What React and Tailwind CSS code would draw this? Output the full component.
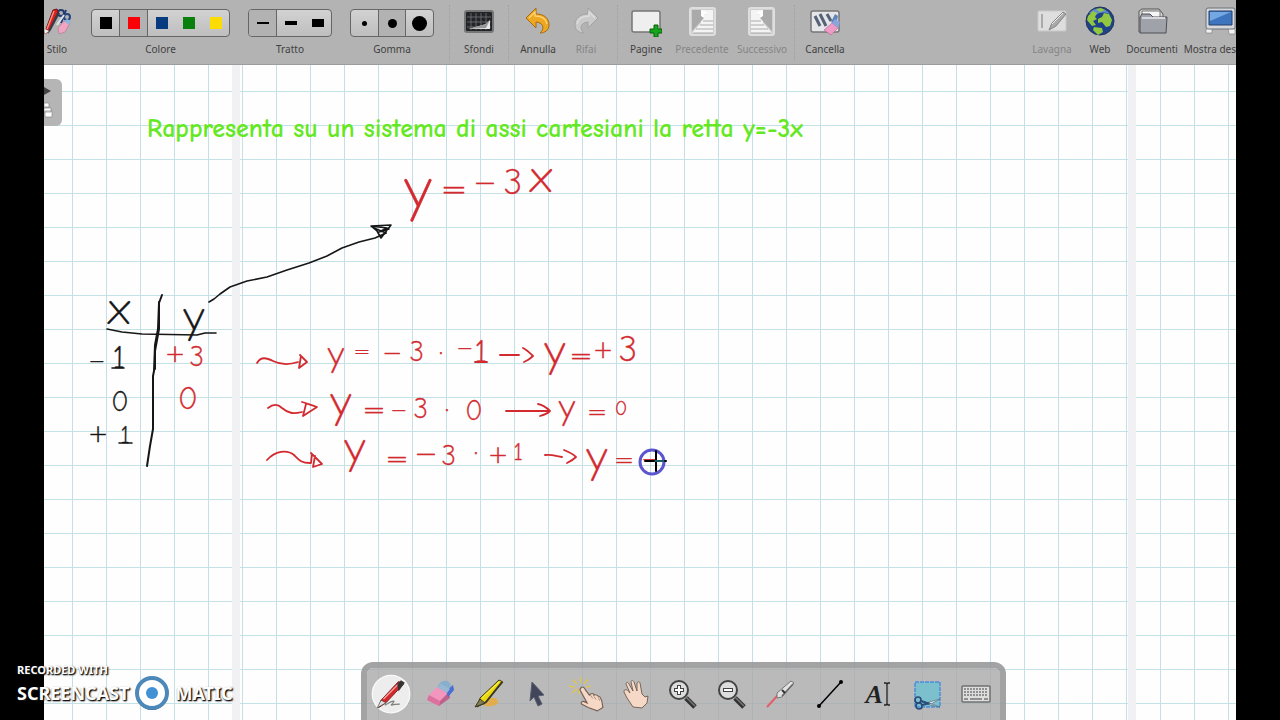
import clsx from 'clsx';

const COLORS = [
  { name: 'Nero', className: 'bg-black' },
  { name: 'Rosso', className: 'bg-[#fb0007]' },
  { name: 'Blu', className: 'bg-[#073b80]' },
  { name: 'Verde', className: 'bg-[#0a800c]' },
  { name: 'Giallo', className: 'bg-[#fbdc04]' },
];

const LINES = [
  { name: 'Sottile', className: 'h-0.5 w-3' },
  { name: 'Medio', className: 'h-1 w-3' },
  { name: 'Spesso', className: 'h-2 w-3' },
];

const ERASERS = [
  { name: 'Piccola', className: 'size-[5px] rounded-full' },
  { name: 'Media', className: 'size-[9px] rounded-full' },
  { name: 'Grande', className: 'size-[15px] rounded-full' },
];

// Handwritten symbols: [text, centre x, baseline, size]
const BLACK_INK = [
  ['x', 119, 324, 46], ['y', 194, 332, 46],
  ['−', 97, 368, 20], ['1', 119, 368, 32],
  ['0', 120, 411, 28],
  ['+', 98, 442, 24], ['1', 125, 443, 24],
];

const RED_INK = [
  ['y', 418, 209, 60], ['=', 454, 200, 32], ['−', 485, 192, 28], ['3', 513, 194, 36], ['x', 541, 192, 46],
  ['+', 175, 362, 24], ['3', 197, 366, 28],
  ['0', 188, 409, 32],
  ['y', 336, 366, 36], ['=', 362, 358, 20], ['−', 392, 361, 24], ['3', 417, 361, 28], ['·', 441, 363, 28],
  ['−', 465, 355, 20], ['1', 481, 362, 32],
  ['y', 555, 366, 46], ['=', 581, 365, 28], ['+', 603, 358, 24], ['3', 628, 361, 36],
  ['y', 341, 417, 46], ['=', 374, 419, 28], ['−', 399, 417, 20], ['3', 421, 418, 28], ['·', 447, 420, 28], ['0', 474, 420, 28],
  ['y', 567, 419, 36], ['=', 597, 420, 24], ['0', 621, 415, 20],
  ['y', 355, 463, 46], ['=', 397, 468, 28], ['−', 426, 463, 28], ['3', 449, 465, 28], ['·', 476, 463, 28], ['+', 498, 463, 24], ['1', 518, 460, 24],
  ['y', 597, 472, 46], ['=', 624, 468, 24], ['−', 650, 466, 20],
];

function Icon({ children, className = 'size-8' }) {
  return (
    <svg viewBox="0 0 32 32" className={clsx('shrink-0', className)} fill="none" aria-hidden="true">
      {children}
    </svg>
  );
}

const StyleIcon = () => (
  <Icon>
    <path d="M20 18l5-13" stroke="#223c73" strokeWidth="2" />
    <circle cx="20" cy="8" r="3" stroke="#223c73" strokeWidth="2" />
    <circle cx="26" cy="12" r="3" stroke="#28457f" strokeWidth="2" />
    <path d="M23 10l-7 10" stroke="#dde3ec" strokeWidth="2" />
    <path d="M17 23l6-7 6 2-5 9-6 2z" fill="#f2a5c2" stroke="#b47b95" strokeWidth=".7" />
    <path d="M23 16l3-2 4 2-2 4z" fill="#8fb5dc" />
    <path d="M12 5l4-1 1 3-9 19-4 3 1-5z" fill="#dc1f1d" stroke="#6e1515" />
    <path d="M13 6L6 24" stroke="#ff9186" strokeWidth="1.4" />
    <path d="M19 8L10 25l-3 4 1-5 8-16z" fill="#393d48" />
    <path d="M4 24l4 2-4 3z" fill="#eee" />
  </Icon>
);

const BoardIcon = () => (
  <Icon>
    <rect x="2" y="6" width="28" height="21" rx="2" fill="#222427" stroke="#777" strokeWidth="2" />
    <path d="M4 12h24M4 17h24M4 22h24M8 8v17M13 8v17M18 8v17M23 8v17" stroke="#73767b" strokeWidth=".8" />
    <path d="M6 24l17-5 4-4v9z" fill="#e8e8e8" />
    <path d="M5 24l18-5 4-4-4 8z" fill="#999" />
  </Icon>
);

const ArrowIcon = ({ redo }) => (
  <Icon className={redo ? 'size-8 -scale-x-100' : 'size-8'}>
    <path
      d="M4 13L14 3v6c8 0 13 4 13 11 0 5-4 8-9 8 4-3 5-10-4-11v6z"
      fill={redo ? '#cacaca' : '#eda720'}
      stroke={redo ? '#a2a2a2' : '#a76c13'}
      strokeLinejoin="round"
    />
    <path d="M7 13l6-6v4c7 0 11 3 12 8" stroke={redo ? '#dedede' : '#ffd475'} strokeWidth="1.3" />
  </Icon>
);

const PageIcon = () => (
  <Icon>
    <rect x="2" y="6" width="28" height="21" rx="2" fill="#efefef" stroke="#777" strokeWidth="1.5" />
    <path d="M24 20h4v4h4v4h-4v4h-4v-4h-4v-4h4z" fill="#16a51b" stroke="#08600b" />
  </Icon>
);

const TurnIcon = ({ next }) => (
  <Icon className={next ? 'size-8 -scale-x-100' : 'size-8'}>
    <rect x="4" y="3" width="25" height="27" rx="2" fill="#cecece" stroke="#dedede" strokeWidth="2" />
    <path d="M15 5h12v23H6l9-10z" fill="#f4f4f4" />
    <path d="M6 5h9l6 4-3 1v3L6 26z" fill="#aaa" />
    <path d="M15 5c3 1 6 1 6 4l-3 1v3l-3-2z" fill="#fff" />
    <path d="M17 16h10M14 20h13M10 24h17M7 28h20" stroke="#aaa" strokeWidth="1" />
  </Icon>
);

const ClearIcon = () => (
  <Icon>
    <rect x="2" y="6" width="28" height="21" rx="2" fill="#e5e6e9" stroke="#777" strokeWidth="1.5" />
    <path d="M6 11l5 10M11 9l6 12M18 9l4 7" stroke="#566275" strokeWidth="3" />
    <path d="M22 17l4-8 3 2-2 9z" fill="#6185bb" />
    <path d="M15 25l8-7 6 5-7 7z" fill="#ee9bc6" stroke="#ad6692" strokeWidth=".6" />
    <path d="M23 18l3-4 5 3-2 6z" fill="#8aa4de" />
  </Icon>
);

const WhiteboardIcon = () => (
  <Icon>
    <rect x="2" y="6" width="28" height="20" rx="1" fill="#dedede" stroke="#c9c9c9" />
    <path d="M6 9v14" stroke="#aaa" strokeWidth="2" />
    <path d="M13 25l3-7L27 7l3 2-10 12z" fill="#aaa" stroke="#858585" />
    <path d="M16 19L27 8" stroke="#eee" />
  </Icon>
);

const GlobeIcon = () => (
  <Icon>
    <circle cx="16" cy="16" r="14" fill="#1e438a" stroke="#253455" />
    <path d="M5 8c6-6 15-6 21 1-5-2-10-2-14 1z" fill="#638dcc" />
    <path d="M4 11l5-5 4 2-2 4 2 2-4 2 3 4-4 1-5-6zM14 14l4-2 2-4 5 1 3 6-2 6-4 1-4-5-4 1zM10 22l8 1 1 4-5 3-5-5zM12 4l5-1 4 2-5 2z" fill="#92c742" />
  </Icon>
);

const FolderIcon = () => (
  <Icon>
    <path d="M3 27V6l3-2h17l4 5v16z" fill="#d4d4d4" stroke="#555" />
    <path d="M6 6h18v18H6z" fill="#f5f5f5" stroke="#777" />
    <path d="M4 28V12l2-3h8l3 3h14l-1 16z" fill="#9fa2a9" stroke="#4d4f55" />
    <path d="M6 13h23" stroke="#d5d7dc" strokeWidth="2" />
  </Icon>
);

const DesktopIcon = () => (
  <Icon>
    <path d="M2 25l2-3h4v6H2zM24 22h5l2 3v4h-6z" fill="#f2f2f2" stroke="#777" strokeWidth=".6" />
    <rect x="2" y="3" width="29" height="21" rx="2" fill="#d5d8dd" stroke="#6d7077" />
    <path d="M5 6h23v14H5z" fill="#3c75bd" stroke="#263e68" />
    <path d="M6 7h21L6 16z" fill="#75a8e2" />
  </Icon>
);

const PenTool = () => (
  <Icon className="size-10">
    <circle cx="16" cy="16" r="15" fill="#ededed" stroke="#fafafa" />
    <path d="M11 25c8-5 9-4 5 0 3-1 5-1 7-1" stroke="#7c8179" />
    <path d="M8 21L22 6l4 2-14 15-6 4z" fill="#d5272a" stroke="#6f1e22" strokeWidth=".7" />
    <path d="M10 20L23 7" stroke="#f7a3a0" />
    <path d="M21 8l3-3 3 2-5 7z" fill="#363333" />
    <path d="M5 27l3-6 4 2z" fill="#e0e0e0" stroke="#444" strokeWidth=".5" />
  </Icon>
);

const EraserTool = () => (
  <Icon>
    <path d="M15 6c4-5 11-4 12 2l-6 6-8-5z" fill="#87aecc" />
    <path d="M5 17l8-8 12 7-10 12L3 22z" fill="#f396bd" />
    <path d="M3 22l12 6 1-5L5 17z" fill="#db719e" />
    <path d="M15 28l1-5 9-9 1 6z" fill="#be628b" />
    <path d="M22 13l7-6 1 5-6 7z" fill="#4a6ed1" />
    <path d="M13 9l4-3 9 5-3 4z" fill="#9ab7d2" />
  </Icon>
);

const MarkerTool = () => (
  <Icon>
    <path d="M14 20h10v3h2c-2 5-9 6-15 5z" fill="#e9ac3a" opacity=".85" />
    <path d="M7 20L26 2l4 2-18 21-8 4z" fill="#ead910" stroke="#3d3910" />
    <path d="M29 4L13 24l-3 2" stroke="#3a3829" strokeWidth="2" />
    <path d="M9 20L26 4" stroke="#fff35b" />
    <path d="M2 29l5-8 5 4z" fill="#81804e" stroke="#38382b" />
  </Icon>
);

const PointerTool = () => (
  <Icon>
    <path d="M11 4l12 13-6 1 4 8-4 2-4-9-4 4z" fill="#41465a" stroke="#595e70" strokeLinejoin="round" />
  </Icon>
);

const FingerTool = () => (
  <Icon className="size-9">
    <path d="M1 9l5 1M4 3l4 4M11 1v5M18 3l-4 4M20 9l-4 1M4 15l4-4M10 12v4" stroke="#e9c832" strokeWidth="1" />
    <path
      d="M12 10c2-1 3 1 4 3l3 4 1-1c2-1 3 0 3 1 2-1 3 0 4 1 2 0 2 2 3 4l1 6-5 3-8-3-6-3c-1-2 1-3 3-2l2 1-6-11c-1-1 0-2 1-3z"
      fill="#f6d8c7"
      stroke="#766056"
    />
    <path d="M20 17l2 3M23 18l2 3M27 19l1 3" stroke="#9c7d6e" strokeWidth=".7" />
  </Icon>
);

const HandTool = () => (
  <Icon>
    <path
      d="M6 12c2-1 3 1 5 3L7 6c0-2 2-2 3 0l4 7-2-9c0-2 2-2 3 0l3 9V5c1-2 3-1 3 0l2 11 3 3 3-1-1 7-5 5-9-1-6-9-3-6c0-1 0-2 1-2z"
      fill="#f6d8c7"
      stroke="#77655a"
    />
  </Icon>
);

const ZoomTool = ({ plus }) => (
  <Icon>
    <path d="M19 20l9 9" stroke="#333" strokeWidth="5" />
    <path d="M19 19l9 9" stroke="#777" strokeWidth="1.5" />
    <circle cx="12" cy="12" r="9" fill="#ddd" stroke="#444" strokeWidth="2" />
    <path d="M7 12h10" stroke="#444" strokeWidth="4" />
    {plus && <path d="M12 7v10" stroke="#444" strokeWidth="4" />}
    <path d="M8 12h8" stroke="#fff" strokeWidth="2" />
    {plus && <path d="M12 8v8" stroke="#fff" strokeWidth="2" />}
  </Icon>
);

const LaserTool = () => (
  <Icon>
    <path d="M2 29l11-12" stroke="#e25f68" strokeWidth="2" />
    <path d="M12 15L26 3l3 2-12 14-5 1z" fill="#e2e2e2" stroke="#777" />
    <path d="M28 6L17 18" stroke="#666" strokeWidth="1.5" />
    <path d="M17 12l3 3" stroke="#333" strokeWidth="2" />
  </Icon>
);

const LineTool = () => (
  <Icon>
    <path d="M5 28L27 4" stroke="#000" strokeWidth="1.5" />
    <circle cx="5" cy="28" r="2" fill="#000" />
    <circle cx="27" cy="4" r="2" fill="#000" />
  </Icon>
);

const TextTool = () => (
  <span className="flex items-center font-['Liberation_Serif',serif] text-[26px] text-[#222]">
    <span className="font-bold italic">A</span>
    <svg viewBox="0 0 8 24" className="h-6 w-2" fill="none" aria-hidden="true">
      <path d="M1 1h2l1 1 1-1h2M4 2v20M1 23h2l1-1 1 1h2" stroke="#222" strokeWidth="1.3" />
    </svg>
  </span>
);

const CaptureTool = () => (
  <Icon>
    <rect x="4" y="4" width="25" height="25" fill="#7cc0cd" stroke="#2774e6" strokeDasharray="4 1" />
    <circle cx="7" cy="22" r="3" stroke="#294b78" strokeWidth="1.7" />
    <circle cx="8" cy="28" r="3" stroke="#294b78" strokeWidth="1.7" />
    <path d="M10 23l9 3M11 27l8-2" stroke="#294b78" strokeWidth="2" />
    <path d="M18 24l11-3-9 5zM18 25l11 4-10-2z" fill="#dee6ea" stroke="#587381" strokeWidth=".7" />
  </Icon>
);

const KeyboardTool = () => (
  <Icon>
    <rect x="2" y="8" width="28" height="16" rx="1" fill="#ddd" stroke="#707070" strokeWidth="1.5" />
    <path d="M4 11h24M4 14h24M4 17h24" stroke="#777" strokeWidth="1.5" strokeDasharray="2 1" />
    <path d="M4 21h4M10 21h12M24 21h4" stroke="#777" strokeWidth="1.5" />
  </Icon>
);

const TOOLS = [
  { name: 'Penna', icon: <PenTool /> },
  { name: 'Cancellino', icon: <EraserTool /> },
  { name: 'Evidenziatore', icon: <MarkerTool /> },
  { name: 'Selezione', icon: <PointerTool /> },
  { name: 'Interagisci', icon: <FingerTool /> },
  { name: 'Scorri', icon: <HandTool /> },
  { name: 'Ingrandisci', icon: <ZoomTool plus /> },
  { name: 'Riduci', icon: <ZoomTool /> },
  { name: 'Laser', icon: <LaserTool /> },
  { name: 'Linea', icon: <LineTool /> },
  { name: 'Testo', icon: <TextTool /> },
  { name: 'Cattura', icon: <CaptureTool /> },
  { name: 'Tastiera', icon: <KeyboardTool /> },
];

function ToolButton({ label, icon, disabled, className }) {
  return (
    <button
      type="button"
      disabled={disabled}
      className={clsx('flex h-14 shrink-0 flex-col items-center whitespace-nowrap', disabled ? 'text-[#858585]' : 'text-[#414141]', className)}
    >
      {icon}
      <span className="mt-1 leading-4">{label}</span>
    </button>
  );
}

function Choice({ label, options, active, divided, swatch, className }) {
  return (
    <div role="group" aria-label={label} className={clsx('flex shrink-0 flex-col items-center pt-1', className)}>
      <div className="flex h-7 w-full overflow-hidden rounded border border-[#666] bg-linear-to-b from-[#d2d2d2] to-[#bebebe]">
        {options.map((option, index) => (
          <button
            key={option.name}
            type="button"
            aria-label={option.name}
            aria-pressed={index === active}
            className={clsx('flex flex-1 items-center justify-center', index === active && 'bg-[#b2b2b2]', divided.includes(index) && 'border-r border-[#666]')}
          >
            <span className={clsx(option.className, swatch ? 'size-3' : 'bg-black')} />
          </button>
        ))}
      </div>
      <span className="mt-1 leading-4 text-[#414141]">{label}</span>
    </div>
  );
}

const Separator = () => <span className="h-14 w-0 shrink-0 border-l border-dotted border-[#a0a0a0]" />;

function Toolbar() {
  return (
    <header className="flex h-[65px] shrink-0 overflow-hidden border-b border-[#9c9c9c] bg-[#b3b3b3] pt-[5px] font-['Noto_Sans',sans-serif] text-[10px]">
      <ToolButton label="Stilo" icon={<StyleIcon />} className="w-[26px]" />
      <div className="ml-[21px] mr-[15px] flex shrink-0 gap-[18px]">
        <Choice label="Colore" options={COLORS} active={1} divided={[0, 1]} swatch className="w-[139px]" />
        <Choice label="Tratto" options={LINES} active={0} divided={[0]} className="w-[84px]" />
        <Choice label="Gomma" options={ERASERS} active={1} divided={[0, 1]} className="w-[84px]" />
      </div>
      <Separator />
      <ToolButton label="Sfondi" icon={<BoardIcon />} className="w-[58px]" />
      <Separator />
      <ToolButton label="Annulla" icon={<ArrowIcon />} className="w-[58px]" />
      <ToolButton label="Rifai" icon={<ArrowIcon redo />} disabled className="mr-3 w-[38px]" />
      <Separator />
      <ToolButton label="Pagine" icon={<PageIcon />} className="w-[56px]" />
      <ToolButton label="Precedente" icon={<TurnIcon />} disabled className="w-[56px]" />
      <ToolButton label="Successivo" icon={<TurnIcon next />} disabled className="w-[64px]" />
      <Separator />
      <ToolButton label="Cancella" icon={<ClearIcon />} className="w-[60px]" />
      <div className="ml-auto flex shrink-0">
        <ToolButton label="Lavagna" icon={<WhiteboardIcon />} disabled className="w-[48px]" />
        <ToolButton label="Web" icon={<GlobeIcon />} className="w-[48px]" />
        <ToolButton label="Documenti" icon={<FolderIcon />} className="w-[56px]" />
        <button type="button" className="flex h-14 w-[56px] shrink-0 flex-col items-end whitespace-nowrap text-[#414141]">
          <DesktopIcon />
          <span className="mt-1 leading-4">Mostra des</span>
        </button>
      </div>
    </header>
  );
}

function InkText({ items }) {
  return items.map(([text, x, y, size]) => (
    <text
      key={`${x}-${y}`}
      x={x}
      y={y}
      fontSize={size}
      textAnchor="middle"
      className={
        '=−+·'.includes(text)
          ? "font-['DejaVu_Sans',sans-serif] font-extralight"
          : "font-['Comic_Sans_MS','Comic_Neue','DejaVu_Sans',sans-serif] font-light"
      }
    >
      {text}
    </text>
  ));
}

function Ink() {
  return (
    <svg
      viewBox="44 65 1192 655"
      className="absolute left-0 top-0 h-[655px] w-[1192px]"
      fill="none"
      strokeLinecap="round"
      strokeLinejoin="round"
    >
      {/* table rules and the arrow to the equation */}
      <g stroke="#161616" strokeWidth="2">
        <path d="M162 295l-3 8-1 26-3 16-1 26-1 5v53l-3 17-3 20" />
        <path d="M159 302v27l-4 22v18" />
        <path d="M107 329l15 3 20 2 55 1 8-2h11" strokeWidth="1.6" />
        <path d="M112 368h12M119 443h13" strokeWidth="1.6" />
        <path d="M209 302l5-3 6-5 10-7 17-6 20-4 20-7 22-7 18-7 15-8 17-6 16-4 11-5" strokeWidth="1.6" />
        <path d="M371 226l20-1-10 13-4-7zM371 226l16 2-8 4 10-3M374 228l12 5" strokeWidth="1.6" />
      </g>
      <g fill="#161616" stroke="#161616" strokeWidth=".4">
        <InkText items={BLACK_INK} />
      </g>

      {/* arrows between the steps */}
      <g stroke="#d32a30" strokeWidth="1.8">
        <path d="M257 363c4-7 10-5 16-2 8 4 16 4 25 1M300 355l7 7-8 6 2-12" />
        <path d="M268 408c5-4 10-4 14 0 7 6 12 6 20 4M302 402c6 2 10 3 15 5l-14 9 3-12" />
        <path d="M267 460c8-9 20-11 27-5 5 5 7 8 16 8M311 453l11 11-9 3 2-11M312 454l-1 9" />
        <path d="M500 355h19M523 348c4 2 7 5 10 8-2 2-4 4-9 6" />
        <path d="M506 411h42M538 404c5 1 8 3 12 7-3 3-6 4-10 5" />
        <path d="M545 455c6-1 11 1 17 2M564 450c5 2 9 4 12 7-3 3-5 4-9 6" />
        <path d="M475 362h12" />
      </g>
      <g fill="#d32a30" stroke="#d32a30" strokeWidth=".4">
        <InkText items={RED_INK} />
      </g>

      {/* pen cursor */}
      <circle cx="652" cy="462" r="12" stroke="#5b55cf" strokeWidth="3" />
      <path d="M645 461h21M656 451v20" stroke="#000" strokeWidth="2" />
      <path d="M655 461h9" stroke="#35bccc" strokeWidth="1" />
    </svg>
  );
}

function Watermark() {
  return (
    <div className="absolute bottom-2.5 left-[17px] font-['Noto_Sans',sans-serif] font-bold text-white [text-shadow:1px_1px_2px_#000,1px_1px_1px_#333]">
      <p className="text-[11px] leading-3">RECORDED WITH</p>
      <div className="flex items-center gap-1.5 text-lg">
        <span>SCREENCAST</span>
        <svg viewBox="0 0 34 34" className="size-[34px]" aria-hidden="true">
          <circle cx="17" cy="18" r="14" fill="#fff" stroke="#333" strokeWidth="4" />
          <circle cx="17" cy="17" r="15" fill="#fff" stroke="#4c88b8" strokeWidth="4" />
          <circle cx="17" cy="17" r="6" fill="#4291d4" />
        </svg>
        <span>MATIC</span>
      </div>
    </div>
  );
}

function PageTab() {
  return (
    <button type="button" aria-label="Pagine" className="absolute left-0 top-3.5 h-[47px] w-[18px] rounded-r-md bg-[#b5b5b5]">
      <svg viewBox="0 0 18 47" className="h-[47px] w-[18px]" aria-hidden="true">
        <path d="M0 8l7 4-7 4z" fill="#444" />
        <path d="M0 24h5v4H0zM0 29h7v4H0zM1 32h7v6H1z" fill="#fff" stroke="#888" strokeWidth=".7" />
      </svg>
    </button>
  );
}

export default function App() {
  return (
    <div className="relative h-screen overflow-hidden bg-black px-11">
      <div className="flex h-full flex-col">
        <Toolbar />
        <main className="relative flex-1 overflow-hidden bg-[#fefefe] bg-[linear-gradient(to_right,#c4dfe6_1px,transparent_1px),linear-gradient(to_bottom,#c4e2e6_1px,transparent_1px)] bg-[size:34px_34px] bg-[position:28px_26px]">
          <div className="absolute inset-y-0 left-[188px] w-2 bg-[#f1f1f3]" />
          <div className="absolute inset-y-0 right-[100px] w-2 bg-[#f1f1f3]" />
          <h1 className="absolute left-[103px] top-[45px] whitespace-nowrap font-['Comic_Sans_MS','Comic_Neue',Lato,sans-serif] text-[26px] font-bold text-[#63e822]">
            Rappresenta su un sistema di assi cartesiani la retta y=-3x
          </h1>
          <Ink />
          <PageTab />
          <nav
            aria-label="Strumenti"
            className="absolute bottom-0 left-[317px] flex h-[58px] w-[645px] rounded-t-xl border-x-[6px] border-t-[6px] border-[#999]/90 bg-[#a9a9a9]/80 bg-clip-padding"
          >
            {TOOLS.map((tool) => (
              <button key={tool.name} type="button" aria-label={tool.name} className="flex flex-1 items-center justify-center">
                {tool.icon}
              </button>
            ))}
          </nav>
        </main>
      </div>
      <Watermark />
    </div>
  );
}
